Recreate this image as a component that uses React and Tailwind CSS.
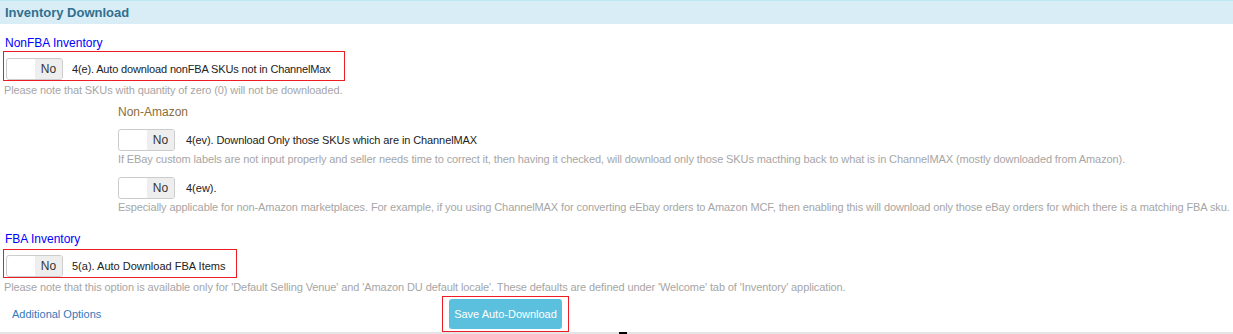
import React from 'react';

const Toggle = () => (
    <div className="flex h-[22px] w-[57px] shrink-0 overflow-hidden rounded-[3px] border border-[#cccccc] bg-white">
        <div className="w-[28px]" />
        <div className="flex flex-1 items-center justify-center bg-[#eeeeee] text-[12px] text-[#333]">No</div>
    </div>
);

const Note = ({ children, className = '' }) => (
    <div className={`whitespace-nowrap text-[11px] leading-[13px] tracking-[-0.1px] text-[#a6a6a6] ${className}`}>{children}</div>
);

const App = () => {
    return (
        <div className="relative h-[334px] w-[1233px] overflow-hidden bg-white font-['Liberation_Sans',Arial,sans-serif] text-[#222]">
            {/* panel heading */}
            <div className="flex h-[24px] items-center border-t border-[#bce8f1] bg-[#d9edf7] px-[5px] text-[13px] font-bold text-[#31708f]">
                Inventory Download
            </div>

            <div className="pl-[5px] pt-[12px] text-[12px] leading-[15px] text-[#0000ff]">NonFBA Inventory</div>

            <div className="ml-[3px] flex h-[30px] w-[342px] items-end border border-[#ee1c25] pl-[2px]">
                <div className="flex items-center">
                    <Toggle />
                    <span className="ml-[9px] text-[11px] tracking-[-0.15px] text-[#222]">4(e). Auto download nonFBA SKUs not in ChannelMax</span>
                </div>
            </div>
            <Note className="ml-[4px] mt-[3px]">Please note that SKUs with quantity of zero (0) will not be downloaded.</Note>

            <div className="ml-[118px]">
                <div className="mt-[8px] text-[12px] leading-[15px] text-[#8a6d3b]">Non-Amazon</div>

                <div className="mt-[9px] flex items-center">
                    <Toggle />
                    <span className="ml-[11px] text-[11px] tracking-[-0.1px]">4(ev). Download Only those SKUs which are in ChannelMAX</span>
                </div>
                <Note className="mt-[2px]">If EBay custom labels are not input properly and seller needs time to correct it, then having it checked, will download only those SKUs macthing back to what is in ChannelMAX (mostly downloaded from Amazon).</Note>

                <div className="mt-[11px] flex items-center">
                    <Toggle />
                    <span className="ml-[11px] text-[11px]">4(ew).</span>
                </div>
                <Note className="mt-[2px]">Especially applicable for non-Amazon marketplaces. For example, if you using ChannelMAX for converting eEbay orders to Amazon MCF, then enabling this will download only those eBay orders for which there is a matching FBA sku.</Note>
            </div>

            <div className="pl-[5px] pt-[18px] text-[12px] leading-[15px] text-[#0000ff]">FBA Inventory</div>

            <div className="ml-[3px] mt-[2px] flex h-[29px] w-[234px] items-end border border-[#ee1c25] pl-[2px]">
                <div className="flex items-center">
                    <Toggle />
                    <span className="ml-[9px] text-[11px] text-[#222]">5(a). Auto Download FBA Items</span>
                </div>
            </div>
            <Note className="ml-[4px] mt-[3px]">Please note that this option is available only for 'Default Selling Venue' and 'Amazon DU default locale'. These defaults are defined under 'Welcome' tab of 'Inventory' application.</Note>

            <div className="mt-[2px] flex items-center">
                <a className="ml-[12px] w-[430px] text-[11px] text-[#337ab7]">Additional Options</a>
                <div className="flex h-[36px] w-[127px] items-center justify-center border border-[#ee1c25]">
                    <button className="h-[30px] w-[113px] rounded-[3px] bg-[#5bc0de] text-[11px] text-white">Save Auto-Download</button>
                </div>
            </div>

            <div className="absolute bottom-0 left-0 h-[2px] w-full bg-[#e5e5e5]" />
            <div className="absolute bottom-0 left-[619px] h-[2px] w-[8px] bg-black" />
        </div>
    );
};

export default App;
